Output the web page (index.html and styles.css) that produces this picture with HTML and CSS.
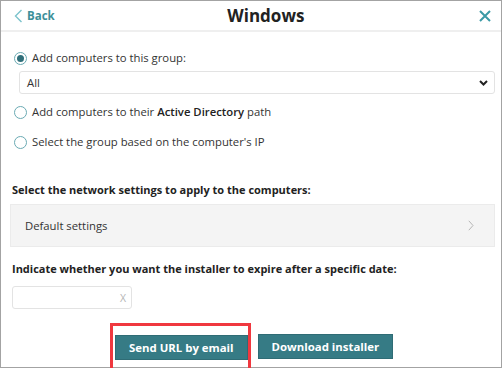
FILE: index.html
```html
<!DOCTYPE html>
<html>
<head>
<meta charset="utf-8">
<link rel="stylesheet" href="styles.css">
</head>
<body>
<div class="frame">
  <header class="header">
    <a class="back">
      <svg class="back-icon" width="9" height="14" viewBox="0 0 9 14"><path d="M7.5 1 L1.5 7 L7.5 13" fill="none" stroke="#7cc3cc" stroke-width="1.4"/></svg>
      <span>Back</span>
    </a>
    <h1 class="title">Windows</h1>
    <svg class="close" width="12" height="12" viewBox="0 0 12 12"><path d="M1 1 L11 11 M11 1 L1 11" stroke="#3a9aa6" stroke-width="2"/></svg>
  </header>
  <main class="content">
    <label class="radio-row first">
      <span class="radio checked"></span>
      <span>Add computers to this group:</span>
    </label>
    <div class="select">
      <span>All</span>
      <svg width="9" height="6" viewBox="0 0 9 6"><path d="M1 1 L4.5 4.5 L8 1" fill="none" stroke="#222" stroke-width="2"/></svg>
    </div>
    <label class="radio-row second">
      <span class="radio"></span>
      <span>Add computers to their <b class="semi">Active Directory</b> path</span>
    </label>
    <label class="radio-row third">
      <span class="radio"></span>
      <span>Select the group based on the computer's IP</span>
    </label>
    <p class="section-label net">Select the network settings to apply to the computers:</p>
    <div class="settings-box">
      <span>Default settings</span>
      <svg width="6" height="11" viewBox="0 0 6 11"><path d="M0.8 0.8 L5 5.5 L0.8 10.2" fill="none" stroke="#b5b5b5" stroke-width="1"/></svg>
    </div>
    <p class="section-label exp">Indicate whether you want the installer to expire after a specific date:</p>
    <div class="date-input"><span class="clear">X</span></div>
    <div class="actions">
      <div class="highlight">
        <button class="btn">Send URL by email</button>
      </div>
      <button class="btn">Download installer</button>
    </div>
  </main>
</div>
</body>
</html>
```

FILE: styles.css
```css
* { box-sizing: border-box; }
html, body { margin: 0; padding: 0; background: #fff; }
body {
  font-family: "Open Sans", "Liberation Sans", sans-serif;
  color: #333;
  font-size: 11.3px;
}
.frame {
  width: 502px;
  height: 368px;
  border: 1px solid #a3a3a3;
  display: flex;
  flex-direction: column;
}
.header {
  height: 31px;
  flex: none;
  border-bottom: 2px solid #efefef;
  display: flex;
  align-items: center;
  padding: 0 10px 0 13px;
}
.back {
  display: flex;
  align-items: center;
  gap: 4px;
  color: #3d8f99;
  font-weight: 700;
  font-size: 11.5px;
}
.title {
  flex: 1;
  margin: 0 0 0 -2px;
  text-align: center;
  font-size: 17px;
  font-weight: 700;
  color: #222;
  line-height: 22px;
}
.close { display: block; }
.content {
  flex: 1;
  padding: 0 6px 0 9px;
  display: flex;
  flex-direction: column;
}
.radio-row {
  display: flex;
  align-items: center;
  gap: 5px;
  height: 18px;
  line-height: 18px;
  padding-left: 4px;
  color: #333;
}
.radio-row.first { margin-top: 17px; }
.radio-row.second { margin-top: 9px; }
.radio-row.third { margin-top: 12px; }
.radio {
  width: 13px;
  height: 13px;
  border-radius: 50%;
  border: 1.5px solid #6aaab3;
  display: flex;
  align-items: center;
  justify-content: center;
  flex: none;
}
.radio.checked::after {
  content: "";
  width: 7px;
  height: 7px;
  border-radius: 50%;
  background: #2f6f7a;
}
.semi { font-weight: 600; color: #222; }
.select {
  margin: 4px 0 0 9px;
  height: 23px;
  flex: none;
  border: 1px solid #e3e3e3;
  border-radius: 3px;
  display: flex;
  align-items: center;
  justify-content: space-between;
  padding: 0 6px 0 7px;
}
.section-label {
  margin: 0;
  font-weight: 700;
  font-size: 11px;
  line-height: 16px;
  color: #222;
  padding-left: 2px;
}
.section-label.net { margin-top: 31px; }
.section-label.exp { margin-top: 14px; }
.settings-box {
  margin-top: 6px;
  height: 43px;
  flex: none;
  background: #f4f4f4;
  border: 1px solid #ebebeb;
  display: flex;
  align-items: center;
  justify-content: space-between;
  padding: 0 20px 0 14px;
}
.date-input {
  margin: 9px 0 0 2px;
  width: 120px;
  height: 23px;
  flex: none;
  border: 1px solid #e3e3e3;
  border-radius: 3px;
  display: flex;
  align-items: center;
  justify-content: flex-end;
  padding-right: 5px;
}
.clear { color: #b5b5b5; font-size: 10.5px; }
.actions {
  margin-top: 14px;
  display: flex;
  align-items: center;
  gap: 7px;
  padding-left: 100px;
}
.highlight {
  position: relative;
  padding: 12px 3px 10px 5px;
}
.highlight::after {
  content: "";
  position: absolute;
  top: 0;
  left: 0;
  right: 0;
  bottom: -2px;
  border: 3px solid #f0383f;
}
.btn {
  font-family: "Open Sans", "Liberation Sans", sans-serif;
  font-weight: 700;
  font-size: 11.4px;
  color: #fff;
  background: #367b85;
  border: 1px solid #2f6c75;
  height: 25px;
  padding: 0 13px;
  cursor: pointer;
}
```
